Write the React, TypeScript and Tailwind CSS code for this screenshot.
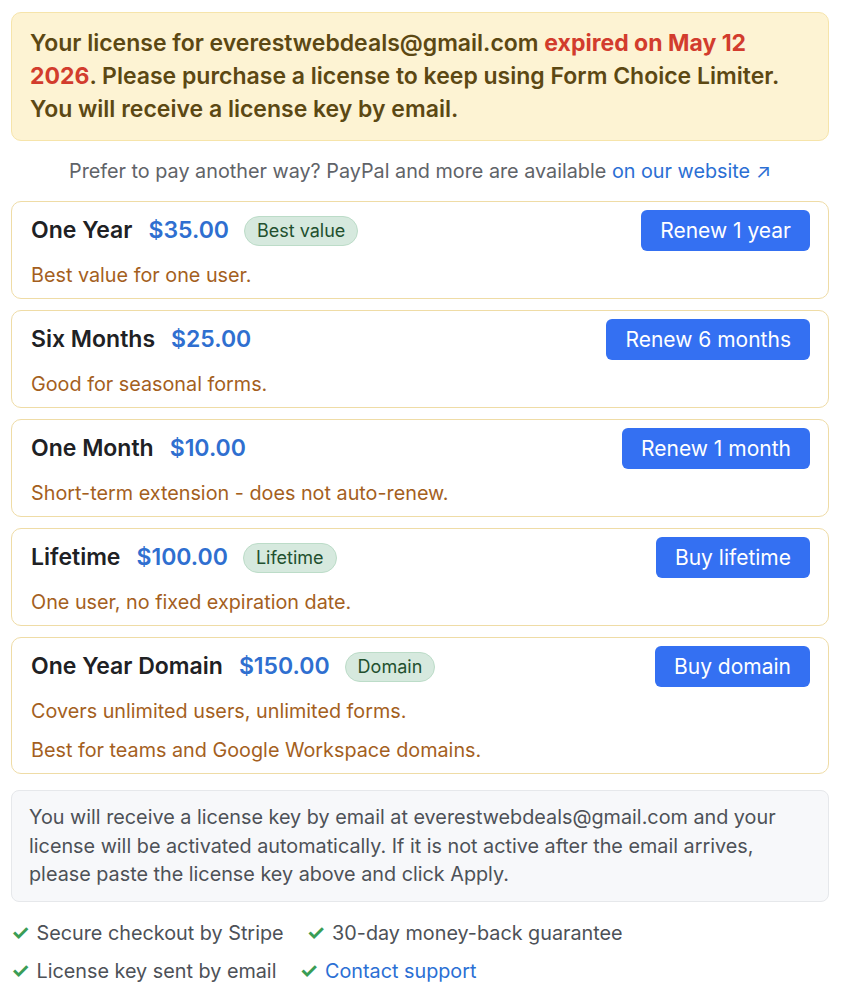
import React from "react";

type Plan = {
  name: string;
  price: string;
  badge?: string;
  button: string;
  notes: string[];
};

const plans: Plan[] = [
  { name: "One Year", price: "$35.00", badge: "Best value", button: "Renew 1 year", notes: ["Best value for one user."] },
  { name: "Six Months", price: "$25.00", button: "Renew 6 months", notes: ["Good for seasonal forms."] },
  { name: "One Month", price: "$10.00", button: "Renew 1 month", notes: ["Short-term extension - does not auto-renew."] },
  { name: "Lifetime", price: "$100.00", badge: "Lifetime", button: "Buy lifetime", notes: ["One user, no fixed expiration date."] },
  {
    name: "One Year Domain",
    price: "$150.00",
    badge: "Domain",
    button: "Buy domain",
    notes: ["Covers unlimited users, unlimited forms.", "Best for teams and Google Workspace domains."],
  },
];

function PlanCard({ plan }: { plan: Plan }) {
  return (
    <div className="border border-[#efdca6] rounded-[10px] bg-white pl-[19px] pr-[18px] pt-[8px] pb-[8px]">
      <div className="flex items-center justify-between h-[41px]">
        <div className="flex items-center">
          <span className="text-[23px] font-semibold text-[#202124]">{plan.name}</span>
          <span className="ml-[16px] text-[23px] font-semibold text-[#2f6fd0]">{plan.price}</span>
          {plan.badge && (
            <span className="ml-[15px] h-[30px] px-[12px] flex items-center rounded-full bg-[#d6e9de] border border-[#bcdcc8] text-[18px] text-[#22502e]">
              {plan.badge}
            </span>
          )}
        </div>
        <button className="h-[41px] px-[19px] rounded-[6px] bg-[#3470f2] text-white text-[21px]">{plan.button}</button>
      </div>
      <div className="mt-[9px] flex flex-col gap-[9px]">
        {plan.notes.map((n) => (
          <div key={n} className="text-[19.8px] leading-[30px] text-[#a45f1e]">{n}</div>
        ))}
      </div>
    </div>
  );
}

function Check() {
  return <span className="text-[#3a9d56] text-[21px] font-bold mr-[7px]">✓</span>;
}

export default function App() {
  return (
    <div className="w-[848px] min-h-[998px] bg-white pl-[11px] pt-[12px] pr-[19px]" style={{ fontFamily: "Inter, 'Noto Sans', sans-serif" }}>
      <div className="bg-[#fdf3d3] border border-[#f6e4aa] rounded-[10px] px-[18px] pt-[14px] pb-[14px] text-[23px] leading-[33px] font-semibold text-[#5c4813]">
        Your license for everestwebdeals@gmail.com <span className="text-[#d23c2d] font-bold">expired on May 12</span>
        <br />
        <span className="text-[#d23c2d] font-bold">2026</span>. Please purchase a license to keep using Form Choice Limiter.
        <br />
        You will receive a license key by email.
      </div>

      <div className="mt-[15px] text-center text-[19.8px] leading-[30px] text-[#5f6368]">
        Prefer to pay another way? PayPal and more are available{" "}
        <span className="text-[#2b6fd4]">on our website ↗</span>
      </div>

      <div className="mt-[15px] flex flex-col gap-[11px]">
        {plans.map((p) => (
          <PlanCard key={p.name} plan={p} />
        ))}
      </div>

      <div className="mt-[16px] bg-[#f7f8fa] border border-[#e6e8eb] rounded-[8px] px-[17px] pt-[12px] pb-[12px] text-[19.8px] leading-[28.5px] text-[#4d5157]">
        You will receive a license key by email at everestwebdeals@gmail.com and your license will be activated automatically. If it is not
        active after the email arrives, please paste the license key above and click Apply.
      </div>

      <div className="mt-[12px] text-[19.8px] text-[#4d5157] leading-[37px]">
        <div className="flex gap-[23px]">
          <span><Check />Secure checkout by Stripe</span>
          <span><Check />30-day money-back guarantee</span>
        </div>
        <div className="flex gap-[23px]">
          <span><Check />License key sent by email</span>
          <span><Check /><span className="text-[#2b6fd4]">Contact support</span></span>
        </div>
      </div>
    </div>
  );
}
